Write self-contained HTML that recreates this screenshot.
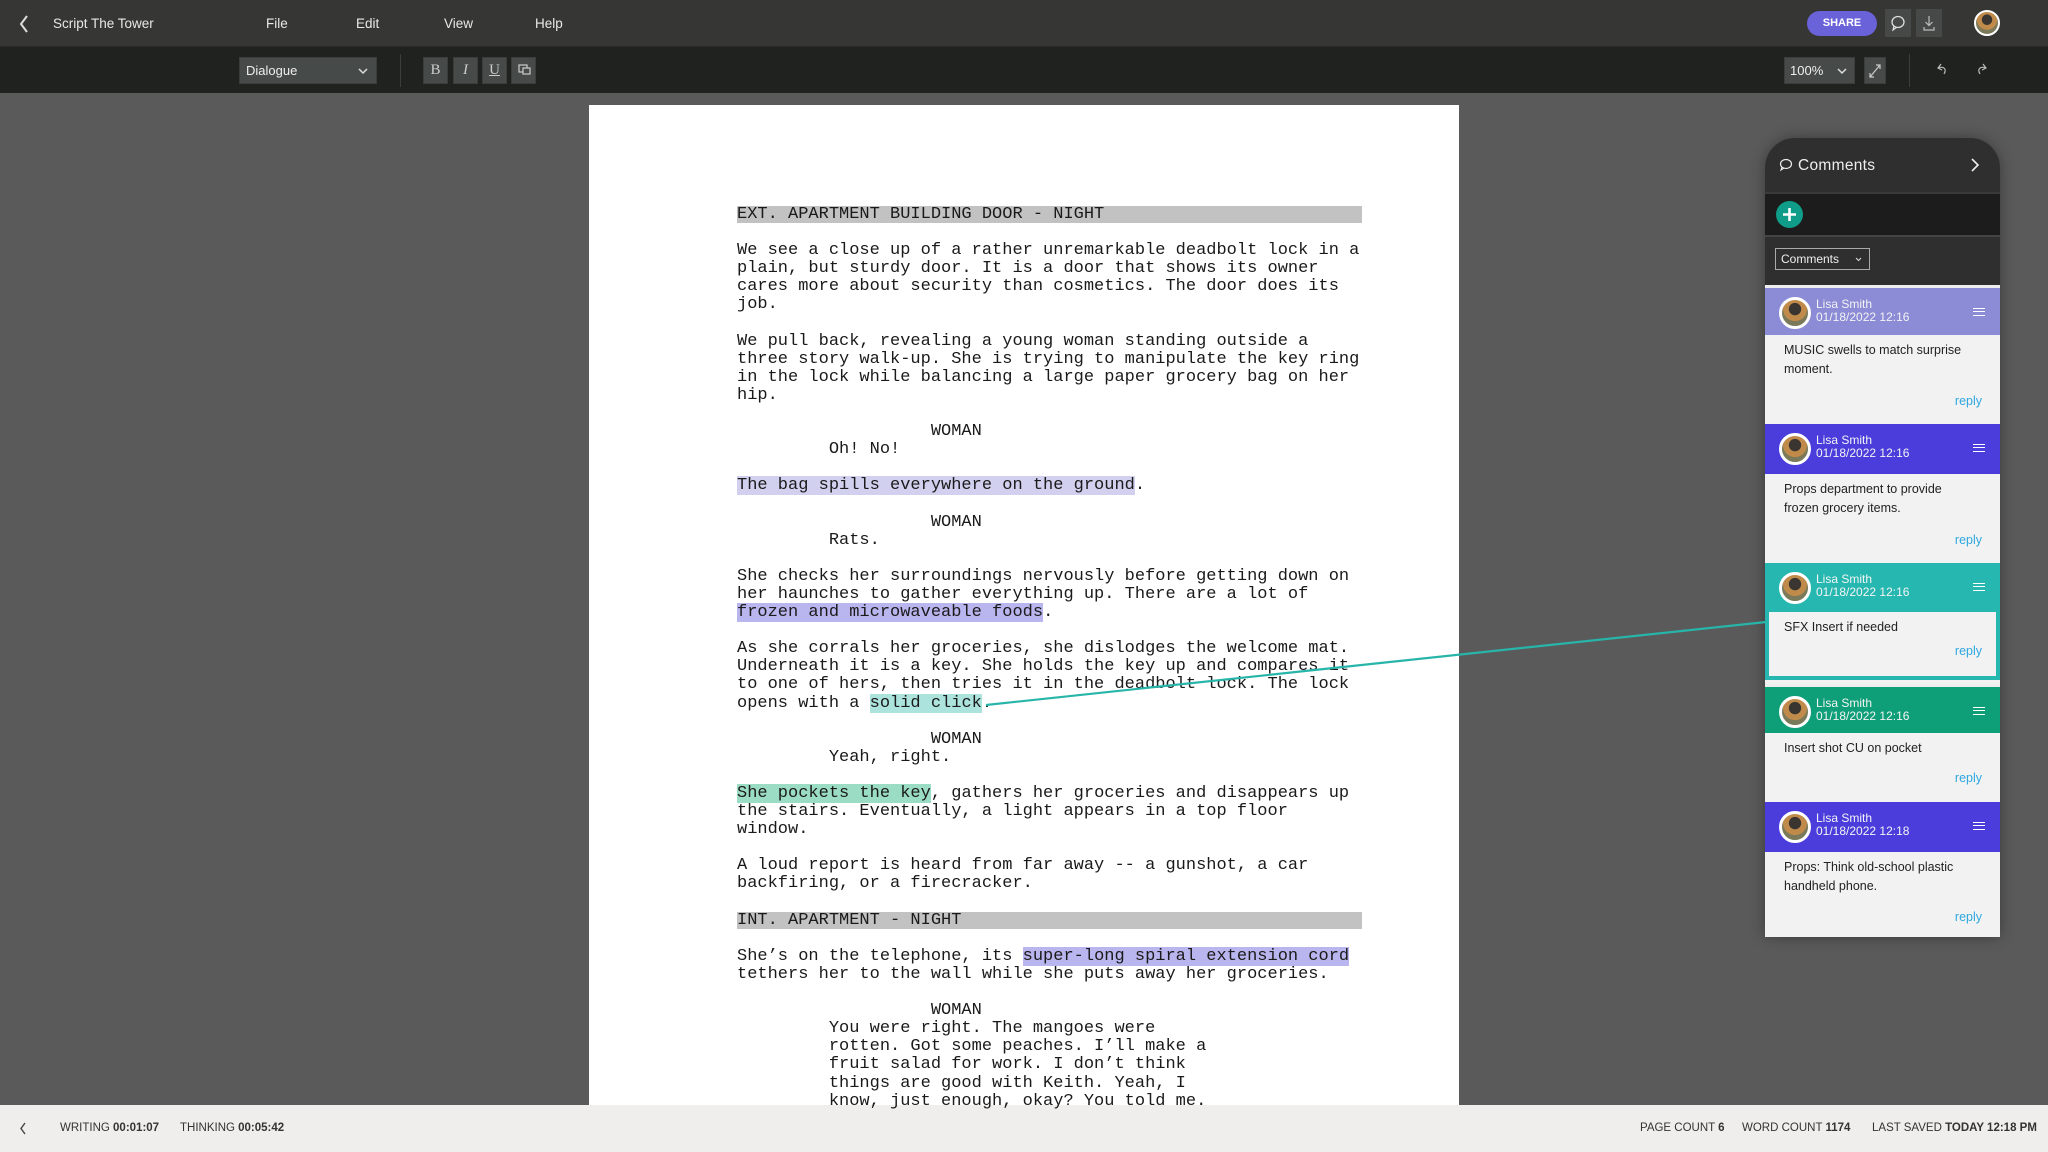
<!DOCTYPE html>
<html><head><meta charset="utf-8">
<style>
*{margin:0;padding:0;box-sizing:border-box}
body{width:2048px;height:1152px;overflow:hidden;background:#5a5a5a;font-family:"Liberation Sans",sans-serif;position:relative}
.abs{position:absolute}
#top{left:0;top:0;width:2048px;height:47px;background:#363735;border-bottom:1px solid #2a2a2a}
#tool{left:0;top:47px;width:2048px;height:46px;background:#202220}
.menu{color:#e8e8e8;font-size:13.5px;top:16px}
.btn{background:#464b4a;border:1px solid #3a3d3c;height:27px;top:57px;color:#ccc;font-size:15px;text-align:center;line-height:25px}
#page{left:589px;top:105px;width:870px;height:1000px;background:#fff}
pre{position:absolute;left:737px;top:206px;font-family:"Liberation Mono",monospace;font-size:17px;line-height:18.1px;color:#1a1a1a;z-index:2}
.band{position:absolute;left:737px;width:625px;height:17px;background:#c2c2c2;z-index:1}
.p1{background:#d2d0ef}.p2{background:#b9b5ee}.t1{background:#ade3dd}.t2{background:#9bdcc5}
#status{left:0;top:1105px;width:2048px;height:47px;background:#efeeec;font-size:11.5px;color:#333}
#status b{font-weight:bold}
#panel{left:1765px;top:138px;width:235px;height:799px;background:#2f2f2f;border-radius:30px 30px 0 0;box-shadow:0 0 14px rgba(0,0,0,.35);overflow:hidden}
.hd{position:absolute;left:0;width:235px;height:50px}
.bd{position:absolute;left:0;width:235px;background:#f2f2f2;font-size:12.5px;color:#222;line-height:19px;padding:6px 30px 6px 19px}
.av{position:absolute;left:14px;top:9px;width:32px;height:32px;border-radius:50%;border:3px solid #fff;background:radial-gradient(circle at 50% 35%,#3a3530 0 28%,#c08a4a 30% 55%,#7a7a5a 57%)}
.nm{position:absolute;left:51px;top:10px;color:#f4f4f4;font-size:12px;line-height:13px}
.hm{position:absolute;right:15px;top:20px;width:12px;height:8px;border-top:1.5px solid #fff;border-bottom:1.5px solid #fff}
.hm:after{content:"";position:absolute;left:0;top:2px;width:12px;border-top:1.5px solid #fff}
.rp{position:absolute;right:18px;color:#2fa8e0;font-size:12.5px}
</style></head><body>
<div id="top" class="abs">
 <svg class="abs" style="left:18px;top:14px" width="12" height="20"><path d="M9 2 L3 10 L9 18" stroke="#ddd" stroke-width="2" fill="none"/></svg>
 <div class="abs menu" style="left:53px">Script The Tower</div>
 <div class="abs menu" style="left:266px">File</div>
 <div class="abs menu" style="left:356px">Edit</div>
 <div class="abs menu" style="left:444px">View</div>
 <div class="abs menu" style="left:535px">Help</div>
 <div class="abs" style="left:1807px;top:11px;width:70px;height:25px;border-radius:13px;background:#6a62d8;color:#fff;font-size:11px;font-weight:bold;text-align:center;line-height:25px">SHARE</div>
 <div class="abs" style="left:1885px;top:9px;width:26px;height:28px;background:#464948"><svg width="26" height="28"><ellipse cx="13" cy="13" rx="6" ry="5.5" stroke="#ddd" stroke-width="1.3" fill="none"/><path d="M9 17 L8 21 L12 18" stroke="#ddd" stroke-width="1.2" fill="none"/></svg></div>
 <div class="abs" style="left:1916px;top:9px;width:26px;height:28px;background:#464948"><svg width="26" height="28"><path d="M13 7 V16 M9.5 13 L13 16.5 L16.5 13 M8 18 V21 H18 V18" stroke="#bbb" stroke-width="1.2" fill="none"/></svg></div>
 <div class="abs" style="left:1974px;top:10px;width:26px;height:26px;border-radius:50%;border:2px solid #fff;background:radial-gradient(circle at 50% 35%,#3a3530 0 28%,#c08a4a 30% 55%,#7a7a5a 57%)"></div>
</div>
<div id="tool" class="abs"></div>
<div class="abs btn" style="left:239px;width:138px;text-align:left;padding-left:6px;font-size:13px;color:#eee">Dialogue<svg class="abs" style="right:8px;top:10px" width="10" height="7"><path d="M1 1 L5 5 L9 1" stroke="#ddd" stroke-width="1.5" fill="none"/></svg></div>
<div class="abs" style="left:400px;top:54px;width:1px;height:33px;background:#3c3e3c"></div>
<div class="abs btn" style="left:423px;width:25px;font-family:'Liberation Serif',serif">B</div>
<div class="abs btn" style="left:453px;width:25px;font-family:'Liberation Serif',serif;font-style:italic">I</div>
<div class="abs btn" style="left:482px;width:25px;font-family:'Liberation Serif',serif;text-decoration:underline">U</div>
<div class="abs btn" style="left:511px;width:25px"><svg width="23" height="25"><rect x="7" y="7" width="8" height="7" stroke="#ccc" fill="none" stroke-width="1.2"/><rect x="11" y="10" width="7" height="6" stroke="#ccc" fill="#464b4a" stroke-width="1.2"/></svg></div>
<div class="abs btn" style="left:1784px;width:71px;text-align:left;padding-left:5px;font-size:13px;color:#eee">100%<svg class="abs" style="right:7px;top:10px" width="10" height="7"><path d="M1 1 L5 5 L9 1" stroke="#ddd" stroke-width="1.5" fill="none"/></svg></div>
<div class="abs btn" style="left:1864px;width:22px"><svg width="20" height="25"><path d="M5 19 L15 7 M11 7 H15 V11 M5 15 V19 H9" stroke="#ccc" stroke-width="1.2" fill="none"/></svg></div>
<div class="abs" style="left:1909px;top:54px;width:1px;height:33px;background:#3c3e3c"></div>
<svg class="abs" style="left:1936px;top:61px" width="14" height="16"><path d="M5 3 L2 7 L6 9 M2 7 C8 5 11 8 8 13" stroke="#bbb" stroke-width="1.2" fill="none"/></svg>
<svg class="abs" style="left:1974px;top:61px" width="14" height="16"><path d="M9 3 L12 7 L8 9 M12 7 C6 5 3 8 6 13" stroke="#bbb" stroke-width="1.2" fill="none"/></svg>

<div id="page" class="abs"></div>
<div class="band" style="top:206px"></div>
<div class="band" style="top:912px"></div>
<pre>EXT. APARTMENT BUILDING DOOR - NIGHT

We see a close up of a rather unremarkable deadbolt lock in a
plain, but sturdy door. It is a door that shows its owner
cares more about security than cosmetics. The door does its
job.

We pull back, revealing a young woman standing outside a
three story walk-up. She is trying to manipulate the key ring
in the lock while balancing a large paper grocery bag on her
hip.

                   WOMAN
         Oh! No!

<span class="p1">The bag spills everywhere on the ground</span>.

                   WOMAN
         Rats.

She checks her surroundings nervously before getting down on
her haunches to gather everything up. There are a lot of
<span class="p2">frozen and microwaveable foods</span>.

As she corrals her groceries, she dislodges the welcome mat.
Underneath it is a key. She holds the key up and compares it
to one of hers, then tries it in the deadbolt lock. The lock
opens with a <span class="t1">solid click</span>.

                   WOMAN
         Yeah, right.

<span class="t2">She pockets the key</span>, gathers her groceries and disappears up
the stairs. Eventually, a light appears in a top floor
window.

A loud report is heard from far away -- a gunshot, a car
backfiring, or a firecracker.

INT. APARTMENT - NIGHT

She’s on the telephone, its <span class="p2">super-long spiral extension cord</span>
tethers her to the wall while she puts away her groceries.

                   WOMAN
         You were right. The mangoes were
         rotten. Got some peaches. I’ll make a
         fruit salad for work. I don’t think
         things are good with Keith. Yeah, I
         know, just enough, okay? You told me.</pre>

<div id="panel" class="abs">
 <svg class="abs" style="left:14px;top:20px" width="14" height="14"><ellipse cx="7" cy="6" rx="5.5" ry="4.5" stroke="#eee" stroke-width="1.2" fill="none"/><path d="M3 9 L2 12 L5 10" stroke="#eee" stroke-width="1.1" fill="none"/></svg>
 <div class="abs" style="left:33px;top:19px;color:#eee;font-size:15.5px;letter-spacing:.3px">Comments</div>
 <svg class="abs" style="left:205px;top:20px" width="10" height="14"><path d="M2 1 L8 7 L2 13" stroke="#eee" stroke-width="1.6" fill="none"/></svg>
 <div class="abs" style="left:0;top:54px;width:235px;height:45px;background:#1b1c1b;border-top:2px solid #3a3a3a;border-bottom:2px solid #444"></div>
 <div class="abs" style="left:11px;top:63px;width:27px;height:27px;border-radius:50%;background:#0f9c88"><svg width="27" height="27"><path d="M13.5 7 V20 M7 13.5 H20" stroke="#fff" stroke-width="2.6"/></svg></div>
 <div class="abs" style="left:10px;top:110px;width:95px;height:22px;border:1px solid #aaa;color:#eee;font-size:12px;line-height:20px;padding-left:5px">Comments<svg class="abs" style="right:7px;top:8px" width="7" height="5"><path d="M1 1 L3.5 3.5 L6 1" stroke="#ddd" stroke-width="1" fill="none"/></svg></div>

 <div class="abs" style="left:0;top:280px;width:235px;height:519px;background:#f2f2f2"></div>

 <div class="hd" style="top:147px;background:#8b8bd6;border-top:3px solid #eee"><div class="av"></div><div class="nm">Lisa Smith<br>01/18/2022 12:16</div><div class="hm"></div></div>
 <div class="bd" style="top:197px;height:87px">MUSIC swells to match surprise moment.<div class="rp" style="top:57px">reply</div></div>

 <div class="hd" style="top:286px;background:#4a3ddb"><div class="av"></div><div class="nm">Lisa Smith<br>01/18/2022 12:16</div><div class="hm"></div></div>
 <div class="bd" style="top:336px;height:86px;padding-right:40px">Props department to provide frozen grocery items.<div class="rp" style="top:57px">reply</div></div>

 <div class="hd" style="top:425px;background:#26b8b0"><div class="av"></div><div class="nm">Lisa Smith<br>01/18/2022 12:16</div><div class="hm"></div></div>
 <div class="bd" style="top:474px;height:68px;border:4px solid #26b8b0;border-top:none;padding:6px 15px">SFX Insert if needed<div class="rp" style="top:30px;right:14px">reply</div></div>

 <div class="hd" style="top:546px;background:#0e9f79;border-top:3px solid #eee;height:49px"><div class="av"></div><div class="nm">Lisa Smith<br>01/18/2022 12:16</div><div class="hm"></div></div>
 <div class="bd" style="top:595px;height:67px">Insert shot CU on pocket<div class="rp" style="top:36px">reply</div></div>

 <div class="hd" style="top:664px;background:#4a3ddb"><div class="av"></div><div class="nm">Lisa Smith<br>01/18/2022 12:18</div><div class="hm"></div></div>
 <div class="bd" style="top:714px;height:85px">Props: Think old-school plastic handheld phone.<div class="rp" style="top:56px">reply</div></div>
</div>

<svg class="abs" style="left:0;top:0;z-index:3" width="2048" height="1152"><path d="M986 705 L1766 622" stroke="#27b5a9" stroke-width="2.2" fill="none"/></svg>

<div id="status" class="abs">
 <svg class="abs" style="left:19px;top:17px" width="8" height="13"><path d="M6 1 L2 6.5 L6 12" stroke="#444" stroke-width="1.4" fill="none"/></svg>
 <div class="abs" style="left:60px;top:17px">WRITING <b>00:01:07</b></div>
 <div class="abs" style="left:180px;top:17px">THINKING <b>00:05:42</b></div>
 <div class="abs" style="left:1640px;top:17px">PAGE COUNT <b>6</b></div>
 <div class="abs" style="left:1742px;top:17px">WORD COUNT <b>1174</b></div>
 <div class="abs" style="left:1872px;top:17px">LAST SAVED <b>TODAY 12:18 PM</b></div>
</div>
</body></html>
